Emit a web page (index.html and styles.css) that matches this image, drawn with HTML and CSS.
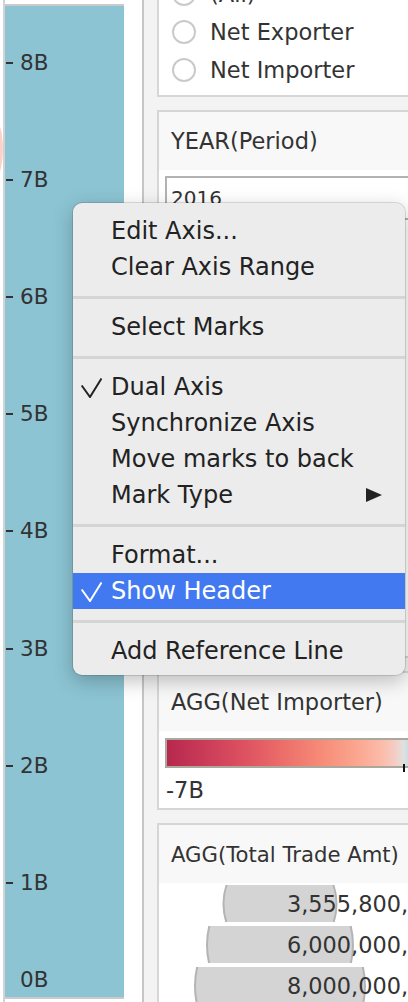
FILE: index.html
```html
<!DOCTYPE html>
<html lang="en">
<head>
<meta charset="utf-8">
<title>Axis context menu</title>
<link rel="stylesheet" href="styles.css">
</head>
<body>
<div class="page">
  <div class="edge"><div class="edge-bubble"></div></div>

  <div class="chart-col">
    <div class="chart">
      <div class="tick" style="top:56.5px"><span class="tick-mark"></span><span>8B</span></div>
      <div class="tick" style="top:173.7px"><span class="tick-mark"></span><span>7B</span></div>
      <div class="tick" style="top:290.9px"><span class="tick-mark"></span><span>6B</span></div>
      <div class="tick" style="top:408.1px"><span class="tick-mark"></span><span>5B</span></div>
      <div class="tick" style="top:525.3px"><span class="tick-mark"></span><span>4B</span></div>
      <div class="tick" style="top:642.5px"><span class="tick-mark"></span><span>3B</span></div>
      <div class="tick" style="top:759.7px"><span class="tick-mark"></span><span>2B</span></div>
      <div class="tick" style="top:876.9px"><span class="tick-mark"></span><span>1B</span></div>
      <div class="tick tick-none" style="top:974px"><span class="tick-mark"></span><span>0B</span></div>
    </div>
  </div>

  <div class="gutter"></div>

  <div class="sidebar">
    <div class="panel panel-radio">
      <div class="radio-row"><span class="radio"></span><span>(All)</span></div>
      <div class="radio-row"><span class="radio"></span><span>Net Exporter</span></div>
      <div class="radio-row"><span class="radio"></span><span>Net Importer</span></div>
    </div>

    <div class="panel">
      <div class="panel-head">YEAR(Period)</div>
      <div class="panel-body body-year">
        <div class="dropdown">2016</div>
      </div>
    </div>

    <div class="panel">
      <div class="panel-head">AGG(Net Importer)</div>
      <div class="panel-body body-color">
        <div class="bar-wrap">
          <div class="color-bar"></div>
          <span class="zero-tick"></span>
        </div>
        <div class="bar-label">-7B</div>
      </div>
    </div>

    <div class="panel">
      <div class="panel-head head-tight">AGG(Total Trade Amt)</div>
      <div class="panel-body body-size">
        <div class="size-row"><span class="bubble" style="width:115px;height:115px"></span><span class="size-text">3,555,800,</span></div>
        <div class="size-row"><span class="bubble" style="width:148px;height:148px"></span><span class="size-text">6,000,000,</span></div>
        <div class="size-row"><span class="bubble" style="width:172px;height:172px"></span><span class="size-text">8,000,000,</span></div>
      </div>
    </div>
  </div>

  <div class="menu">
    <div class="item">Edit Axis...</div>
    <div class="item">Clear Axis Range</div>
    <div class="sep"></div>
    <div class="item">Select Marks</div>
    <div class="sep"></div>
    <div class="item"><svg class="check" viewBox="0 0 22 20"><path d="M1.7 7.5 L10 19 L21.5 0.5"/></svg>Dual Axis</div>
    <div class="item">Synchronize Axis</div>
    <div class="item">Move marks to back</div>
    <div class="item">Mark Type<span class="arrow"></span></div>
    <div class="sep"></div>
    <div class="item">Format...</div>
    <div class="item active"><svg class="check" viewBox="0 0 22 20"><path d="M1.7 7.5 L10 19 L21.5 0.5"/></svg>Show Header</div>
    <div class="sep"></div>
    <div class="item">Add Reference Line</div>
  </div>
</div>
</body>
</html>
```

FILE: styles.css
```css
* { box-sizing: border-box; }

html, body {
  margin: 0;
  padding: 0;
  overflow: hidden;
}

body {
  width: 408px;
  height: 1002px;
  background: #ffffff;
  font-family: "DejaVu Sans", sans-serif;
  color: #333333;
}

.page {
  position: relative;
  display: flex;
  width: 408px;
  height: 1002px;
  overflow: hidden;
}

/* left sliver of neighbouring view */
.edge {
  position: relative;
  flex: none;
  width: 3px;
  overflow: hidden;
}

.edge-bubble {
  position: absolute;
  left: -30px;
  top: 110px;
  width: 33px;
  height: 78px;
  border-radius: 50%;
  background: #fbd2ca;
}

/* chart */
.chart-col {
  flex: none;
  width: 121px;
  border-left: 2px solid #d3d3d3;
  padding-top: 4px;
}

.chart {
  position: relative;
  height: 995px;
  background: #8cc4d3;
  border-top: 2px solid #cacaca;
  border-bottom: 2px solid #cacaca;
}

.tick {
  position: absolute;
  left: 1px;
  display: flex;
  align-items: center;
  gap: 7px;
  transform: translateY(-50%);
  font-size: 21.5px;
  line-height: 24px;
  color: #333333;
}

.tick-mark {
  width: 7px;
  height: 2px;
  background: #333333;
}

.tick-none .tick-mark { visibility: hidden; }

.gutter {
  flex: none;
  width: 18px;
}

/* right side filter / legend cards */
.sidebar {
  flex: none;
  width: 266px;
  border-left: 2px solid #c6c6c6;
  background: #f3f3f3;
  overflow: hidden;
}

.panel {
  width: 400px;
  margin-left: 13px;
  border: 2px solid #d6d6d6;
  background: #ffffff;
}

.panel + .panel { margin-top: 13px; }

.panel-radio {
  margin-top: -27px;
  padding-bottom: 6px;
}

.radio-row {
  display: flex;
  align-items: center;
  gap: 14px;
  height: 38px;
  padding-left: 13px;
  font-size: 22.5px;
}

.radio {
  width: 24px;
  height: 24px;
  border-radius: 50%;
  border: 2px solid #cacaca;
  background: #ffffff;
}

.panel-head {
  display: flex;
  align-items: center;
  height: 58px;
  padding-left: 12px;
  background: #f8f8f8;
  font-size: 22.5px;
  white-space: nowrap;
}

.head-tight { font-size: 21.2px; }

.body-year {
  height: 486px;
  padding: 6px 0 0 6px;
}

.dropdown {
  height: 44px;
  border: 2px solid #b2b2b2;
  padding: 8px 4px 0;
  font-size: 20px;
  line-height: 24px;
}

.body-color {
  height: 77px;
  padding: 7px 0 0 6px;
}

.bar-wrap { position: relative; }

.color-bar {
  width: 500px;
  height: 30px;
  border: 2px solid #aba79c;
  background: linear-gradient(90deg,
    #b6284e 0px,
    #c93a58 35px,
    #dc5060 75px,
    #ec6d69 115px,
    #f68c78 155px,
    #fba68f 190px,
    #fbbcaa 215px,
    #f4cdc4 228px,
    #e2e0de 236px,
    #c9dde6 241px,
    #a9cfe0 300px);
}

.zero-tick {
  position: absolute;
  left: 238px;
  top: 26px;
  width: 2px;
  height: 8px;
  background: #111111;
}

.bar-label {
  margin-top: 4px;
  padding-left: 1px;
  line-height: 36px;
  font-size: 22.5px;
}

.body-size { padding-top: 2px; }

.size-row {
  position: relative;
  display: flex;
  align-items: center;
  height: 37px;
  margin-bottom: 4px;
  padding-left: 128px;
  overflow: hidden;
  font-size: 22.4px;
}

.bubble {
  position: absolute;
  left: 121px;
  top: 50%;
  transform: translate(-50%, -50%);
  border-radius: 50%;
  background: #d4d4d4;
  border: 2px solid #b4b4b4;
}

.size-text { position: relative; }

/* context menu */
.menu {
  position: absolute;
  left: 73px;
  top: 203px;
  width: 332px;
  padding: 10px 0 6px;
  background: #ececec;
  border-radius: 9px;
  box-shadow: 0 0 0 1px rgba(0, 0, 0, 0.12), 0 6px 20px rgba(0, 0, 0, 0.25);
  font-size: 24px;
  color: #222222;
}

.item {
  position: relative;
  display: flex;
  align-items: center;
  height: 36px;
  padding-left: 38px;
}

.item.active {
  background: #4279f0;
  color: #ffffff;
}

.check {
  position: absolute;
  left: 7px;
  top: 9px;
  width: 22px;
  height: 20px;
  fill: none;
  stroke: currentColor;
  stroke-width: 2;
}

.arrow {
  margin-left: auto;
  margin-right: 23px;
  width: 0;
  height: 0;
  border-left: 16px solid #222222;
  border-top: 7px solid transparent;
  border-bottom: 7px solid transparent;
}

.sep {
  display: flex;
  align-items: center;
  height: 24px;
}

.sep::before {
  content: "";
  flex: 1;
  height: 3px;
  background: #d5d5d5;
}
```
